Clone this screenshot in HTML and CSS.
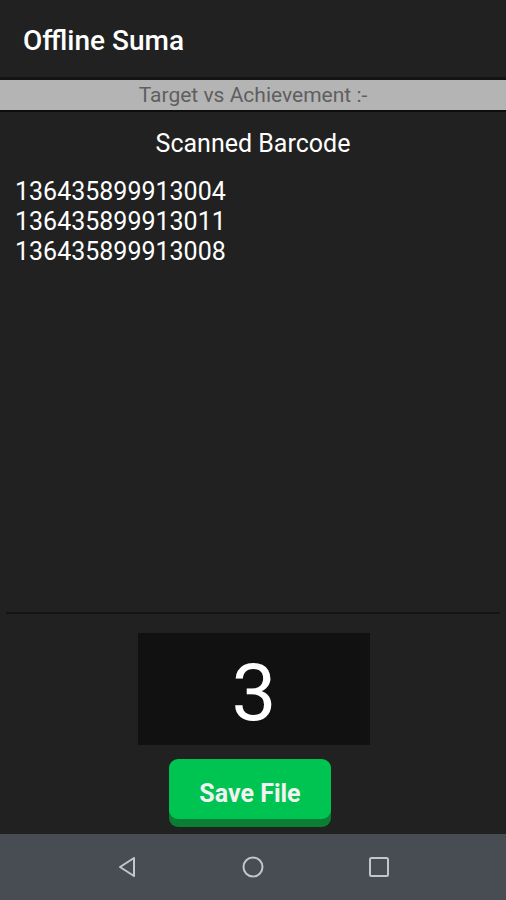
FILE: index.html
```html
<!DOCTYPE html>
<html>
<head>
  <title>Offline Suma</title>
  <link rel="stylesheet" href="styles.css">
</head>
<body>
  <div class="screen">
    <div class="toolbar">Offline Suma</div>
    <div class="target-bar">Target vs Achievement :-</div>

    <div class="content">
      <div class="scan-title">Scanned Barcode</div>
      <div class="barcode-list">
        <div>136435899913004</div>
        <div>136435899913011</div>
        <div>136435899913008</div>
      </div>
    </div>

    <div class="bottom">
      <div class="counter">3</div>
      <button class="save-btn">Save File</button>
    </div>

    <div class="nav-bar">
      <svg width="24" height="24" viewBox="0 0 24 24">
        <path d="M19 3 L5 12 L19 21 Z" fill="none" stroke="#c4c6c8" stroke-width="2" stroke-linejoin="round"/>
      </svg>
      <svg width="24" height="24" viewBox="0 0 24 24">
        <circle cx="12" cy="12" r="9.5" fill="none" stroke="#c4c6c8" stroke-width="2"/>
      </svg>
      <svg width="24" height="24" viewBox="0 0 24 24">
        <rect x="3" y="3" width="18" height="18" rx="1.5" fill="none" stroke="#c4c6c8" stroke-width="2"/>
      </svg>
    </div>
  </div>
</body>
</html>
```

FILE: styles.css
```css
body {
  margin: 0;
  background-color: #212121;
  font-family: Roboto, "Liberation Sans", sans-serif;
}

.screen {
  width: 506px;
  height: 900px;
  display: flex;
  flex-direction: column;
  background-color: #212121;
  color: #ffffff;
}

.toolbar {
  height: 77px;
  padding-left: 23px;
  display: flex;
  align-items: center;
  font-size: 28px;
  font-weight: 500;
  box-sizing: border-box;
  padding-top: 4px;
}

.target-bar {
  height: 30px;
  border-top: 3px solid #141414;
  border-bottom: 2px solid #0d0d0d;
  background-color: #b4b4b4;
  color: #5f5f5f;
  font-size: 21px;
  text-align: center;
  line-height: 31px;
}

.content {
  flex: 1;
  border-bottom: 2px solid #141414;
  margin: 0 6px;
}

.scan-title {
  text-align: center;
  font-size: 25px;
  margin-top: 17px;
  line-height: 30px;
}

.barcode-list {
  margin-top: 18px;
  padding-left: 9px;
  font-size: 25px;
  line-height: 30px;
}

.bottom {
  height: 220px;
  display: flex;
  flex-direction: column;
  align-items: center;
}

.counter {
  margin-top: 19px;
  margin-left: 2px;
  width: 232px;
  height: 112px;
  background-color: #111111;
  font-size: 80px;
  text-align: center;
  line-height: 120px;
}

.save-btn {
  margin-top: 14px;
  margin-right: 6px;
  width: 162px;
  height: 60px;
  border: none;
  border-radius: 9px;
  background-color: #00c452;
  box-shadow: 0 8px 0 #0a7f34;
  color: #f2f2f2;
  font-family: Roboto, "Liberation Sans", sans-serif;
  font-size: 25px;
  font-weight: bold;
  padding-top: 10px;
}

.save-btn:hover {
  cursor: pointer;
}

.nav-bar {
  height: 66px;
  background-color: #474d52;
  display: flex;
  justify-content: center;
  align-items: center;
  gap: 102px;
}
```
